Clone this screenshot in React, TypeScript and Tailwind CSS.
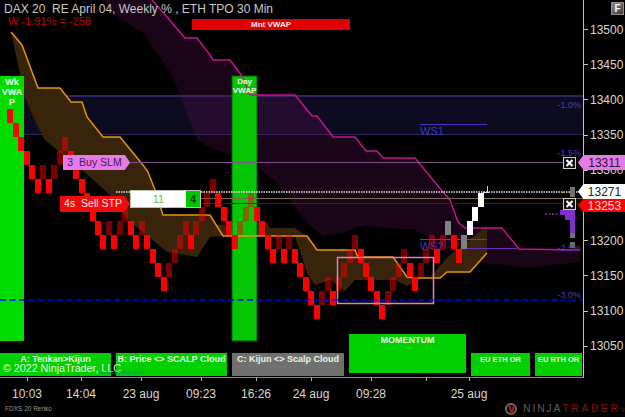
const levels = [
  0, 1, 2, 3, 4, 5, 4, 5, 4, 3, 2, 3, 4, 5, 6, 7, 8, 9, 8, 9, 8, 7, 8, 9, 8, 9, 10, 11, 12, 11, 10, 9, 8, 9, 8, 7, 6, 5, 6, 7, 8, 9, 8, 7, 6,
  7, 8, 9, 10, 9, 10, 9, 10, 11, 12, 13, 14, 13, 12, 13, 12, 11, 10, 9, 10, 11, 12, 13, 14, 13, 12, 11, 10, 11, 12, 11, 10, 9, 10, 9, 8, 9,
  10, 9, 8, 7, 6,
];

const bricks = levels.map((level, idx) => {
  const i = idx + 1;
  const prev = idx > 0 ? levels[idx - 1] : -1;
  let fill = level > prev ? "#ff0000" : "rgba(255,0,0,0.48)";
  if (i === 81 || i === 84) fill = "#808080";
  if (i >= 85) fill = "#ffffff";
  return { x: Math.round(2 + 5.47 * i), y: 109 + 14 * level, fill };
});
// dark bricks go underneath the solid ones
const darkBricks = bricks.filter((b) => b.fill.startsWith("rgba"));
const solidBricks = bricks.filter((b) => !b.fill.startsWith("rgba"));

const magentaLine =
  "152,0 167,17 185,38 197,38 210,55 213,60 230,60 242,76 250,95 295,95 312,116 317,116 333,137 355,137 366,151 377,151 383,158 415,158 443,192 450,200 458,222 465,228 502,228 519,249 580,250";
const magentaLower =
  "580,262 528,268 502,265 470,262 440,245 415,230 387,228 360,226 343,233 323,236 307,223 290,200 273,180 257,167 232,155 215,150 197,140 182,100 173,77 160,57 143,33 117,17 103,0";

const orangeLine =
  "11,32 22,45 38,88 60,88 71,102 82,102 87,117 103,137 120,137 143,165 148,172 155,190 163,215 210,215 223,236 307,236 317,250 355,250 358,257 393,257 407,277 415,278 440,278 447,272 470,272 487,253";
const orangeClouds = [
  "11,32 22,45 38,88 60,88 71,102 82,102 87,117 103,137 120,137 143,165 148,172 155,190 163,215 210,215 223,236 210,237 197,257 167,252 128,220 110,195 90,177 45,140 33,117 25,97",
  "216,225 267,222 270,228 295,228 307,236 223,236",
  "295,236 307,236 317,250 355,250 358,257 393,257 407,277 415,278 440,278 420,279 407,286 395,280 355,280 345,291 330,280 315,285 307,273",
  "430,277 448,257 487,226 487,253 470,272 447,272 440,278",
];

const pctLabels = [
  { text: "-1.0%", cls: "top-[100px]" },
  { text: "-1.5%", cls: "top-[148px]" },
  { text: "-2.5%", cls: "top-[243px]" },
  { text: "-3.0%", cls: "top-[290px]" },
];

const prices = ["13500", "13450", "13400", "13350", "13300", "", "13200", "13150", "13100", "13050"];

const timeTicks = [
  { label: "10:03", cls: "ml-[27px]" },
  { label: "14:04", cls: "ml-[54px]" },
  { label: "23 aug", cls: "ml-[60px]" },
  { label: "09:23", cls: "ml-[60px]" },
  { label: "16:26", cls: "ml-[55px]" },
  { label: "24 aug", cls: "ml-[55px]" },
  { label: "09:28", cls: "ml-[60px]" },
  { label: "", cls: "ml-[55px]" },
  { label: "25 aug", cls: "ml-[43px]" },
];

function ChartDrawing() {
  return (
    <svg className="absolute inset-0" width="583" height="379" viewBox="0 0 583 379">
      {/* percent band */}
      <rect x="0" y="96" width="583" height="38" fill="#0d0b20" />
      <rect x="0" y="95" width="583" height="2" fill="#2f2660" />
      <rect x="0" y="134" width="583" height="1" fill="#2f2660" />

      {/* clouds */}
      <polygon points={`${magentaLine} ${magentaLower}`} fill="rgba(110,15,95,0.24)" />
      {orangeClouds.map((pts) => (
        <polygon key={pts} points={pts} fill="#38240a" />
      ))}

      {/* session bars */}
      <rect x="0" y="76" width="24" height="265" fill="#00dc00" />
      <rect x="232" y="76" width="25" height="265" fill="#06c406" stroke="#0b5a0b" strokeWidth="1" />

      <polyline points={magentaLine} fill="none" stroke="#c4148e" strokeWidth="1.5" />
      <polyline points={orangeLine} fill="none" stroke="#e8920a" strokeWidth="1.5" />

      {/* price levels */}
      <g shapeRendering="crispEdges">
        <rect x="130" y="162" width="433" height="1" fill="#80508a" />
        <rect x="200" y="198" width="383" height="1" fill="#7c6c50" />
        <rect x="200" y="203" width="383" height="1" fill="#8c0000" />
        <rect x="420" y="124" width="67" height="1" fill="#4a30c0" />
        <rect x="420" y="239" width="67" height="1" fill="#5a38c0" />
        <rect x="467" y="248" width="50" height="1" fill="#6a30b0" />
      </g>

      {/* renko bricks */}
      <g shapeRendering="crispEdges">
        {darkBricks.map((b) => (
          <rect key={b.x} x={b.x} y={b.y} width="6" height="14" fill={b.fill} />
        ))}
        {solidBricks.map((b) => (
          <rect key={b.x} x={b.x} y={b.y} width="6" height="14" fill={b.fill} />
        ))}
      </g>
      <path d="M487 186V192M483 192H489" stroke="#d8d8d8" strokeWidth="1" shapeRendering="crispEdges" />

      <rect x="337.5" y="257.5" width="96" height="46" fill="none" stroke="#e880b0" strokeWidth="1.5" />
      <line x1="116" y1="192" x2="583" y2="192" stroke="#e8e8e8" strokeWidth="1.5" strokeDasharray="1.5 1" />
      <line x1="0" y1="300" x2="583" y2="300" stroke="#0000ff" strokeWidth="1.5" strokeDasharray="6 3.5" />

      {/* tpo histogram */}
      <g shapeRendering="crispEdges">
        <rect x="570" y="187" width="5" height="10" fill="#707070" />
        <rect x="570" y="233" width="5" height="5" fill="#707070" />
        <rect x="570" y="242" width="5" height="6" fill="#707070" />
        <rect x="560" y="210" width="15" height="5" fill="#8030c8" />
        <rect x="565" y="215" width="10" height="5" fill="#8030c8" />
        <rect x="570" y="220" width="5" height="13" fill="#8030c8" />
      </g>
      <line x1="545" y1="214" x2="558" y2="214" stroke="#8030c8" strokeWidth="1.5" strokeDasharray="2 1.5" />
      <rect x="561" y="192" width="4" height="1" fill="#b0b030" />
    </svg>
  );
}

function Tag({ outer, inner, shape, cls, children }: { outer: string; inner: string; shape: string; cls: string; children: React.ReactNode }) {
  return (
    <div className={`absolute ${cls} ${outer} ${shape}`}>
      <div className={`flex h-full w-full items-center justify-center ${inner} ${shape}`}>{children}</div>
    </div>
  );
}

function CloseBox({ cls }: { cls: string }) {
  return (
    <svg className={`absolute ${cls}`} width="13" height="12" viewBox="0 0 13 12">
      <rect x="0.5" y="0.5" width="12" height="11" fill="#111" stroke="#d8d4b8" />
      <path d="M3.5 3L9.5 9M9.5 3L3.5 9" stroke="#ffffff" strokeWidth="2" />
    </svg>
  );
}

function BarLabel({ cls, children }: { cls: string; children: React.ReactNode }) {
  return (
    <div className={`flex h-[23px] justify-center overflow-hidden pt-[1px] leading-[11px] font-bold whitespace-nowrap text-[#e8f8e0] ${cls}`}>
      {children}
    </div>
  );
}

export default function App() {
  return (
    <div className="relative flex h-[417px] w-[625px] flex-col overflow-hidden bg-black font-['Liberation_Sans',sans-serif]">
      <div className="flex h-[379px]">
        {/* Chart panel */}
        <div className="relative flex w-[583px] flex-col justify-end">
          <ChartDrawing />

          <div className="absolute top-[3px] left-[4px] text-[12px] leading-[12px] whitespace-pre text-[#c8c8c8]">
            DAX 20  RE April 04, Weekly % , ETH TPO 30 Min
          </div>
          <div className="absolute top-[15px] left-[8px] text-[11px] leading-[12px] text-[#c80000]">W -1,91% = -258</div>
          <div className="absolute top-[19px] left-[192px] flex h-[11px] w-[158px] items-center justify-center bg-[#e00000] text-[8px] font-bold text-[#ffe8e8]">
            Mnt VWAP
          </div>

          <div className="absolute top-[76px] left-0 w-[24px] pt-[1px] text-center text-[9px] leading-[10px] font-bold text-[#e8ffe0]">
            Wk VWA P
          </div>
          <div className="absolute top-[76px] left-[232px] w-[25px] pt-[1px] text-center text-[8px] leading-[9px] font-bold text-[#e8ffe0]">
            Day VWAP
          </div>

          <div className="absolute top-[125px] left-[420px] text-[11px] leading-[13px] text-[#4038b8]">WS1</div>
          <div className="absolute top-[240px] left-[420px] text-[11px] leading-[13px] text-[#4038b8]">WS2</div>
          {pctLabels.map((p) => (
            <div key={p.text} className={`absolute right-[2px] text-[9px] leading-[11px] text-[#4a3cc8] ${p.cls}`}>
              {p.text}
            </div>
          ))}

          {/* Bottom signal boxes */}
          <div className="relative mb-[1px] flex items-end gap-[5px]">
            <BarLabel cls="w-[111px] bg-[#00d000] text-[9px]">A: Tenkan&gt;Kijun</BarLabel>
            <BarLabel cls="w-[111px] bg-[#00d000] text-[9px]">B: Price &lt;&gt; SCALP Cloud</BarLabel>
            <BarLabel cls="w-[112px] bg-[#707070] text-[9px] text-[#e4e4e4]">C: Kijun &lt;&gt; Scalp Cloud</BarLabel>
            <div className="mb-[3px] flex h-[39px] w-[117px] justify-center bg-[#00d000] pt-[1px] text-[9px] leading-[11px] font-bold text-[#e8f8e0]">
              MOMENTUM
            </div>
            <BarLabel cls="w-[59px] bg-[#00d000] text-[7.5px]">EU ETH OR</BarLabel>
            <BarLabel cls="w-[47px] bg-[#00d000] text-[7.5px]">EU RTH OR</BarLabel>
          </div>
          <div className="absolute top-[362px] left-[3px] text-[10.7px] leading-[13px] text-[#e6f4e2]">© 2022 NinjaTrader, LLC</div>
          <div className="absolute top-[368px] left-[99px] text-[6px] leading-[8px] text-[#0c86a0]">www.fin-alg.com</div>
        </div>

        {/* Price axis */}
        <div className="flex w-[42px] flex-col border-l border-[#c8c4a4] pt-[12px]">
          {prices.map((price, i) => (
            <div key={i} className="flex h-[35.2px] shrink-0 items-center gap-[2px]">
              <div className="h-px w-[4px] bg-[#c8c4a4]" />
              <span className="text-[12px] text-[#dcd8c8]">{price}</span>
            </div>
          ))}
        </div>
      </div>

      {/* Time axis */}
      <div className="flex h-[25px] w-[584px] border-t border-[#8c8c84]">
        {timeTicks.map((t) => (
          <div key={t.cls + t.label} className={`flex w-0 flex-col items-center ${t.cls}`}>
            <div className="h-[3px] w-px shrink-0 bg-[#b8b4a4]" />
            <span className="mt-[6px] text-[12px] leading-[14px] whitespace-nowrap text-[#dcd8c8]">{t.label}</span>
          </div>
        ))}
      </div>

      {/* Footer */}
      <div className="flex flex-1 items-center justify-between pb-[1px] pl-[5px]">
        <span className="text-[6.5px] text-[#9a9a9a]">FDXS 20 Renko</span>
        <div className="flex items-center gap-[4px]">
          <svg width="15" height="12" viewBox="0 0 15 12">
            <circle cx="7" cy="6" r="5" fill="none" stroke="#6a6a6a" strokeWidth="2" />
            <path d="M5 1.5L8 10.5L10 2" fill="none" stroke="#a02020" strokeWidth="2" />
          </svg>
          <span className="text-[10.5px] leading-[12px] whitespace-nowrap">
            <span className="tracking-[1.8px] text-[#5e5e5e]">NINJA</span>
            <span className="tracking-[2.5px] text-[#8c1010]">TRADER</span>
            <span className="text-[6px] text-[#8c1010]">®</span>
          </span>
        </div>
      </div>

      {/* Overlays */}
      <div className="absolute top-[2px] left-[611px] flex h-[13px] w-[13px] items-center justify-center border border-[#8a8a8a] bg-linear-to-br from-[#8c8c8c] to-[#3a3a3a] text-[10px] font-bold text-white">
        F
      </div>

      <Tag
        cls="top-[155px] left-[63px] h-[15px] w-[67px]"
        outer="bg-[#c8c0c8]"
        inner="bg-[#e87ae8] text-[#40205c] pr-[4px]"
        shape="[clip-path:polygon(0_0,92%_0,100%_50%,92%_100%,0_100%)]"
      >
        <span className="text-[10.5px] whitespace-pre">3  Buy SLM</span>
      </Tag>
      <Tag
        cls="top-[196px] left-[60px] h-[16px] w-[70px]"
        outer="bg-[#a01010]"
        inner="bg-[#f00c0c] text-[#ffe4e4] pr-[4px]"
        shape="[clip-path:polygon(0_0,92%_0,100%_50%,92%_100%,0_100%)]"
      >
        <span className="text-[10.5px] whitespace-pre">4s  Sell STP</span>
      </Tag>

      <div className="absolute top-[190px] left-[130px] flex h-[18px] w-[71px] items-stretch border border-[#c0c0b0] bg-white text-[11px]">
        <div className="flex flex-1 items-center justify-center text-[#58c858]">11</div>
        <div className="flex w-[14px] items-center justify-center bg-[#00c800] font-bold text-[#0a3a0a]">4</div>
      </div>

      <CloseBox cls="top-[157px] left-[563px]" />
      <CloseBox cls="top-[198px] left-[563px]" />

      <Tag
        cls="top-[155px] left-[578px] h-[15px] w-[47px]"
        outer="bg-[#e87ae8]"
        inner="bg-[#e87ae8] text-[#2a1030] pl-[6px]"
        shape="[clip-path:polygon(0_50%,12%_0,100%_0,100%_100%,12%_100%)]"
      >
        <span className="text-[12px]">13311</span>
      </Tag>
      <Tag
        cls="top-[184px] left-[578px] h-[15px] w-[47px]"
        outer="bg-white"
        inner="bg-white text-[#222] pl-[6px]"
        shape="[clip-path:polygon(0_50%,12%_0,100%_0,100%_100%,12%_100%)]"
      >
        <span className="text-[12px]">13271</span>
      </Tag>
      <Tag
        cls="top-[199px] left-[578px] h-[13px] w-[47px]"
        outer="bg-[#ff0000]"
        inner="bg-[#ff0000] text-[#ffe8e8] pl-[6px]"
        shape="[clip-path:polygon(0_50%,12%_0,100%_0,100%_100%,12%_100%)]"
      >
        <span className="text-[12px]">13253</span>
      </Tag>
    </div>
  );
}
